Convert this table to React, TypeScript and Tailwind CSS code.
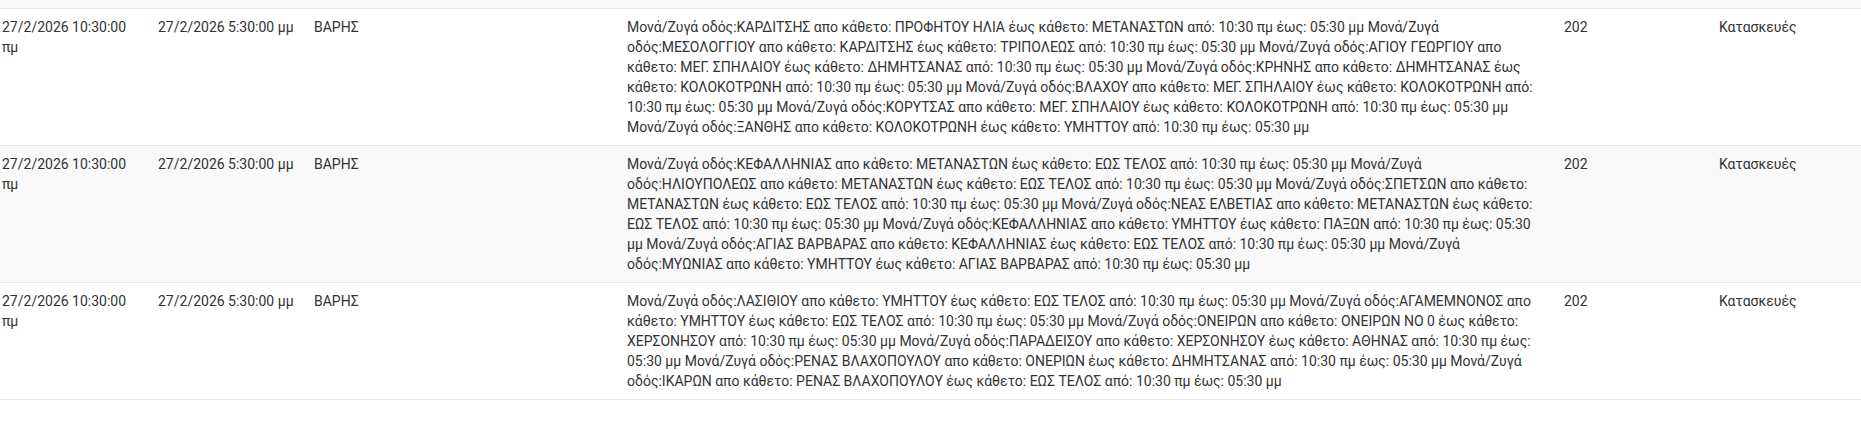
// Road closures table (striped rows)
type Row = {
  from: string;
  to: string;
  area: string;
  details: string;
  code: string;
  kind: string;
};

const rows: Row[] = [
  {
    from: "27/2/2026 10:30:00 πμ",
    to: "27/2/2026 5:30:00 μμ",
    area: "ΒΑΡΗΣ",
    details:
      "Μονά/Ζυγά οδός:ΚΑΡΔΙΤΣΗΣ απο κάθετο: ΠΡΟΦΗΤΟΥ ΗΛΙΑ έως κάθετο: ΜΕΤΑΝΑΣΤΩΝ από: 10:30 πμ έως: 05:30 μμ Μονά/Ζυγά οδός:ΜΕΣΟΛΟΓΓΙΟΥ απο κάθετο: ΚΑΡΔΙΤΣΗΣ έως κάθετο: ΤΡΙΠΟΛΕΩΣ από: 10:30 πμ έως: 05:30 μμ Μονά/Ζυγά οδός:ΑΓΙΟΥ ΓΕΩΡΓΙΟΥ απο κάθετο: ΜΕΓ. ΣΠΗΛΑΙΟΥ έως κάθετο: ΔΗΜΗΤΣΑΝΑΣ από: 10:30 πμ έως: 05:30 μμ Μονά/Ζυγά οδός:ΚΡΗΝΗΣ απο κάθετο: ΔΗΜΗΤΣΑΝΑΣ έως κάθετο: ΚΟΛΟΚΟΤΡΩΝΗ από: 10:30 πμ έως: 05:30 μμ Μονά/Ζυγά οδός:ΒΛΑΧΟΥ απο κάθετο: ΜΕΓ. ΣΠΗΛΑΙΟΥ έως κάθετο: ΚΟΛΟΚΟΤΡΩΝΗ από: 10:30 πμ έως: 05:30 μμ Μονά/Ζυγά οδός:ΚΟΡΥΤΣΑΣ απο κάθετο: ΜΕΓ. ΣΠΗΛΑΙΟΥ έως κάθετο: ΚΟΛΟΚΟΤΡΩΝΗ από: 10:30 πμ έως: 05:30 μμ Μονά/Ζυγά οδός:ΞΑΝΘΗΣ απο κάθετο: ΚΟΛΟΚΟΤΡΩΝΗ έως κάθετο: ΥΜΗΤΤΟΥ από: 10:30 πμ έως: 05:30 μμ",
    code: "202",
    kind: "Κατασκευές",
  },
  {
    from: "27/2/2026 10:30:00 πμ",
    to: "27/2/2026 5:30:00 μμ",
    area: "ΒΑΡΗΣ",
    details:
      "Μονά/Ζυγά οδός:ΚΕΦΑΛΛΗΝΙΑΣ απο κάθετο: ΜΕΤΑΝΑΣΤΩΝ έως κάθετο: ΕΩΣ ΤΕΛΟΣ από: 10:30 πμ έως: 05:30 μμ Μονά/Ζυγά οδός:ΗΛΙΟΥΠΟΛΕΩΣ απο κάθετο: ΜΕΤΑΝΑΣΤΩΝ έως κάθετο: ΕΩΣ ΤΕΛΟΣ από: 10:30 πμ έως: 05:30 μμ Μονά/Ζυγά οδός:ΣΠΕΤΣΩΝ απο κάθετο: ΜΕΤΑΝΑΣΤΩΝ έως κάθετο: ΕΩΣ ΤΕΛΟΣ από: 10:30 πμ έως: 05:30 μμ Μονά/Ζυγά οδός:ΝΕΑΣ ΕΛΒΕΤΙΑΣ απο κάθετο: ΜΕΤΑΝΑΣΤΩΝ έως κάθετο: ΕΩΣ ΤΕΛΟΣ από: 10:30 πμ έως: 05:30 μμ Μονά/Ζυγά οδός:ΚΕΦΑΛΛΗΝΙΑΣ απο κάθετο: ΥΜΗΤΤΟΥ έως κάθετο: ΠΑΞΩΝ από: 10:30 πμ έως: 05:30 μμ Μονά/Ζυγά οδός:ΑΓΙΑΣ ΒΑΡΒΑΡΑΣ απο κάθετο: ΚΕΦΑΛΛΗΝΙΑΣ έως κάθετο: ΕΩΣ ΤΕΛΟΣ από: 10:30 πμ έως: 05:30 μμ Μονά/Ζυγά οδός:ΜΥΩΝΙΑΣ απο κάθετο: ΥΜΗΤΤΟΥ έως κάθετο: ΑΓΙΑΣ ΒΑΡΒΑΡΑΣ από: 10:30 πμ έως: 05:30 μμ",
    code: "202",
    kind: "Κατασκευές",
  },
  {
    from: "27/2/2026 10:30:00 πμ",
    to: "27/2/2026 5:30:00 μμ",
    area: "ΒΑΡΗΣ",
    details:
      "Μονά/Ζυγά οδός:ΛΑΣΙΘΙΟΥ απο κάθετο: ΥΜΗΤΤΟΥ έως κάθετο: ΕΩΣ ΤΕΛΟΣ από: 10:30 πμ έως: 05:30 μμ Μονά/Ζυγά οδός:ΑΓΑΜΕΜΝΟΝΟΣ απο κάθετο: ΥΜΗΤΤΟΥ έως κάθετο: ΕΩΣ ΤΕΛΟΣ από: 10:30 πμ έως: 05:30 μμ Μονά/Ζυγά οδός:ΟΝΕΙΡΩΝ απο κάθετο: ΟΝΕΙΡΩΝ ΝΟ 0 έως κάθετο: ΧΕΡΣΟΝΗΣΟΥ από: 10:30 πμ έως: 05:30 μμ Μονά/Ζυγά οδός:ΠΑΡΑΔΕΙΣΟΥ απο κάθετο: ΧΕΡΣΟΝΗΣΟΥ έως κάθετο: ΑΘΗΝΑΣ από: 10:30 πμ έως: 05:30 μμ Μονά/Ζυγά οδός:ΡΕΝΑΣ ΒΛΑΧΟΠΟΥΛΟΥ απο κάθετο: ΟΝΕΡΙΩΝ έως κάθετο: ΔΗΜΗΤΣΑΝΑΣ από: 10:30 πμ έως: 05:30 μμ Μονά/Ζυγά οδός:ΙΚΑΡΩΝ απο κάθετο: ΡΕΝΑΣ ΒΛΑΧΟΠΟΥΛΟΥ έως κάθετο: ΕΩΣ ΤΕΛΟΣ από: 10:30 πμ έως: 05:30 μμ",
    code: "202",
    kind: "Κατασκευές",
  },
];

export default function App() {
  return (
    <div className="min-h-[433px] w-[1861px] bg-white font-['Roboto',_'Liberation_Sans',_sans-serif] text-sm text-[#333]">
      {/* tail of the previous (striped) row */}
      <div className="h-[8px] bg-[#f9f9f9]" />
      <table className="w-full table-fixed border-collapse border-b border-[#e6e6e6]">
        <colgroup>
          <col className="w-[156px]" />
          <col className="w-[156px]" />
          <col className="w-[313px]" />
          <col className="w-[937px]" />
          <col className="w-[155px]" />
          <col />
        </colgroup>
        <tbody>
          {rows.map((r, i) => (
            <tr
              key={i}
              className={`border-t border-[#e6e6e6] align-top ${i % 2 === 1 ? "bg-[#f9f9f9]" : "bg-white"}`}
            >
              <td className="py-2 pl-[2px] pr-[14px]">{r.from}</td>
              <td className="py-2 pl-[2px] pr-[14px]">{r.to}</td>
              <td className="py-2 pl-[2px] pr-[14px]">{r.area}</td>
              <td className="py-2 pl-[2px] pr-[22px]">{r.details}</td>
              <td className="py-2 pl-[2px] pr-[14px]">{r.code}</td>
              <td className="py-2 pl-[2px] pr-[14px]">{r.kind}</td>
            </tr>
          ))}
        </tbody>
      </table>
    </div>
  );
}
